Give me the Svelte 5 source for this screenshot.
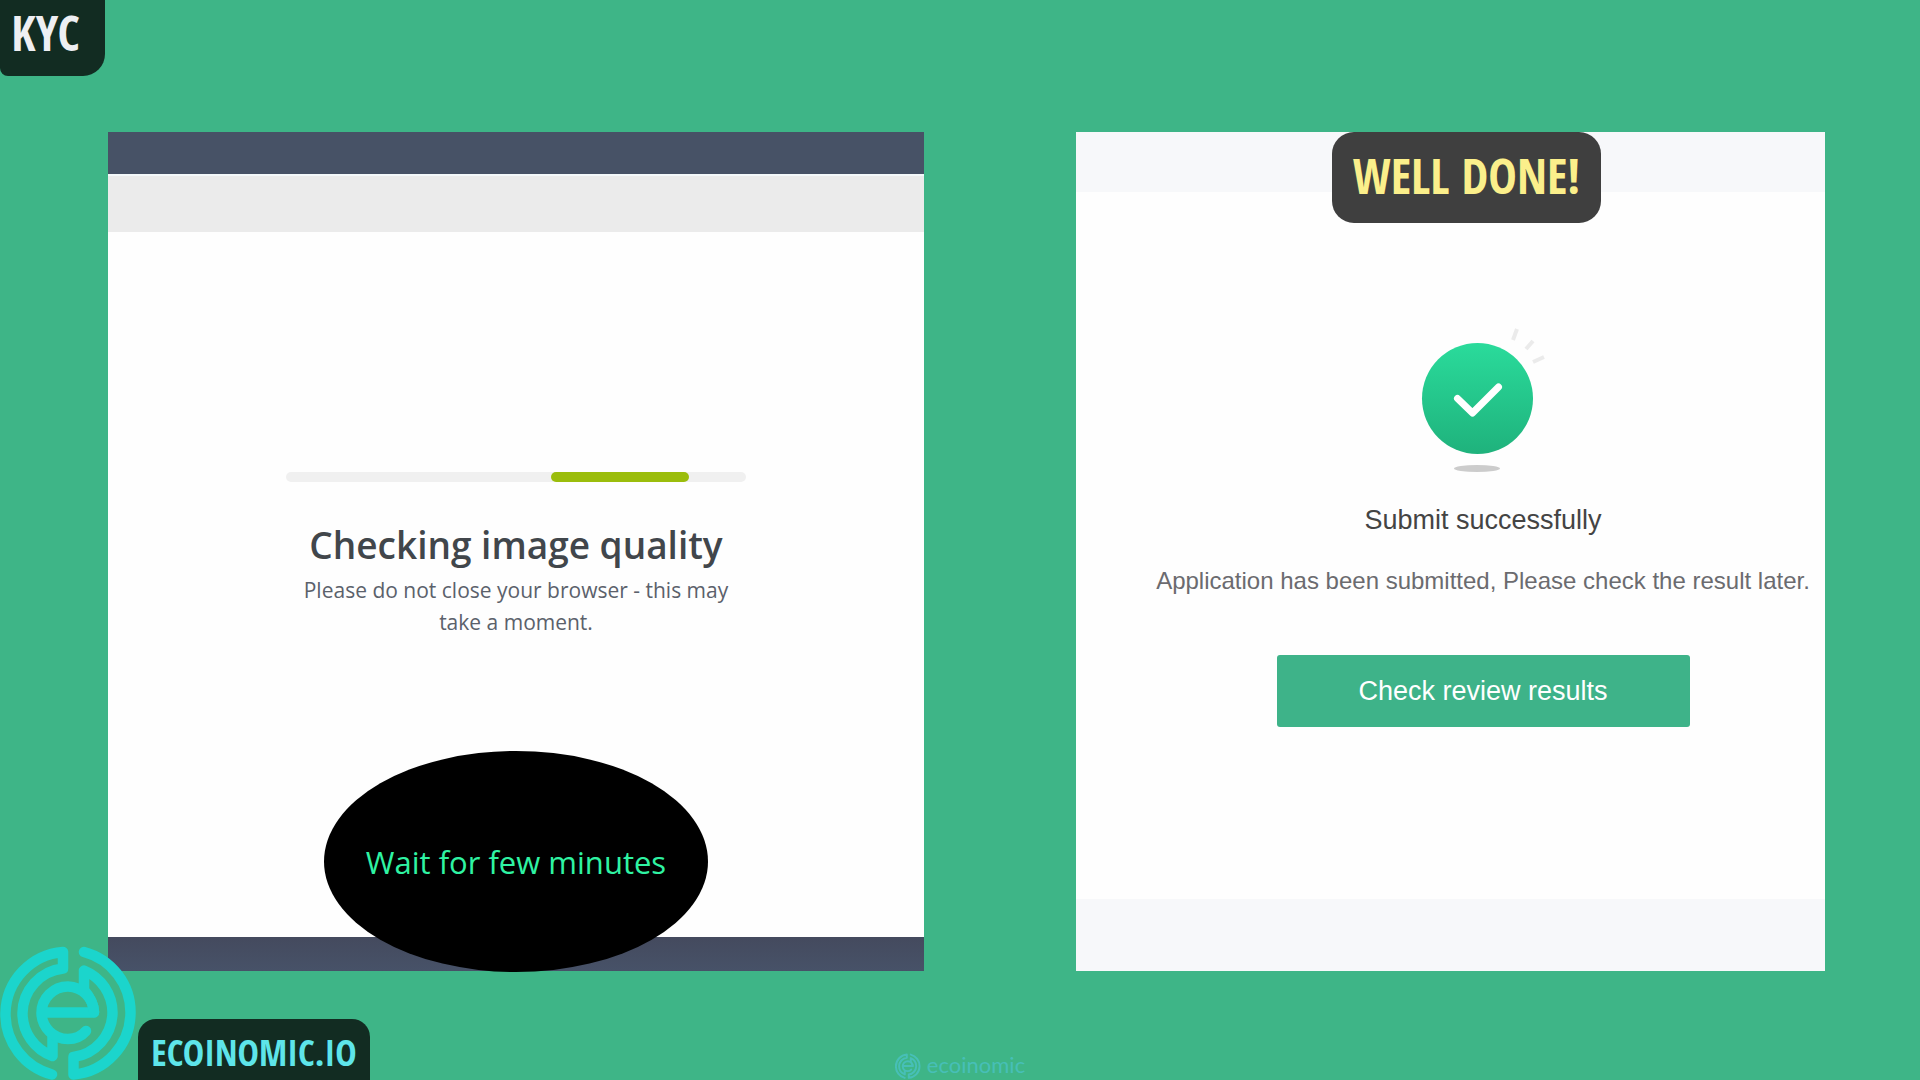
<script>
  const progress = { start: 57.7, size: 30 };
</script>

{#snippet mark()}
  <g fill="none" stroke="currentColor" stroke-width="10.500" stroke-linecap="round" stroke-linejoin="round">
    <path d="M52 134.500 A62.500 62.500 0 0 1 5.500 73 A62.500 62.500 0 0 1 63 12 V28.500 A45.500 45.500 0 0 0 22.500 73 A45.500 45.500 0 0 0 52.500 116 V97" />
    <path d="M42 72.500 H94 A26.500 26.500 0 0 0 68 46.500 A26.500 26.500 0 0 0 41.500 73 A26.500 26.500 0 0 0 68 99 Q79 99 86 91" />
    <path d="M84 12 A62.500 62.500 0 0 1 130.500 73 A62.500 62.500 0 0 1 73.500 134.500 V117 A45.500 45.500 0 0 0 112.500 73 A45.500 45.500 0 0 0 84 30.500 V50 Q93 60 94 72" />
  </g>
{/snippet}

<div class="page">
  <header><h1 class="badge kyc">KYC</h1></header>

  <main>
    <section class="card checking">
      <div class="bar top"></div>
      <div class="strip"></div>
      <div class="body">
        <div class="track" role="progressbar" aria-label="Checking image quality">
          <div class="fill" style="margin-left: {progress.start}%; width: {progress.size}%"></div>
        </div>
        <h2>Checking image quality</h2>
        <p>Please do not close your browser - this may take a moment.</p>
      </div>
      <div class="bar bottom"></div>
      <div class="bubble">Wait for few minutes</div>
    </section>

    <section class="card done">
      <div class="badge well">WELL DONE!</div>
      <div class="result">
        <svg class="success" viewBox="0 0 130 150" aria-hidden="true">
          <defs>
            <linearGradient id="disc" x1="0" y1="0" x2="0" y2="1">
              <stop offset="0" stop-color="#2adb9b" />
              <stop offset="1" stop-color="#1fb27c" />
            </linearGradient>
          </defs>
          <circle cx="59.500" cy="73.500" r="55.500" fill="url(#disc)" />
          <path d="M39.500 73.500 L54.500 88 L80.500 62" fill="none" stroke="#fff" stroke-width="7" stroke-linecap="round" stroke-linejoin="round" />
          <path d="M95 15 L99 4 M108 24 L115 16 M115 37 L126 32" fill="none" stroke="#ebebeb" stroke-width="4" />
          <ellipse cx="59" cy="143.500" rx="23" ry="3.500" fill="#ccc" />
        </svg>
        <h2>Submit successfully</h2>
        <p>Application has been submitted, Please check the result later.</p>
        <button type="button">Check review results</button>
      </div>
    </section>
  </main>

  <footer>
    <svg class="logo" viewBox="0 4 137 136" aria-hidden="true">{@render mark()}</svg>
    <div class="badge site">ECOINOMIC.IO</div>
    <div class="watermark">
      <svg viewBox="0 4 137 136" aria-hidden="true">{@render mark()}</svg>
      <span>ecoinomic</span>
    </div>
  </footer>
</div>

<style>
  :global(body) { margin: 0; }
  .page {
    min-height: 100vh;
    display: grid;
    grid-template-rows: 132px 1fr 109px;
    background: #3eb587;
    font-family: "Open Sans", sans-serif;
    overflow: hidden;
  }
  h1, h2, p { margin: 0; font-weight: 400; }
  header { display: flex; align-items: flex-start; }
  .badge {
    box-sizing: border-box;
    font-family: "Noto Sans ExtraCondensed", "Open Sans Condensed", "Liberation Sans Narrow", "Liberation Sans", sans-serif;
    font-weight: 700;
    white-space: nowrap;
    text-align: center;
  }
  .kyc {
    width: 105px;
    height: 76px;
    padding-right: 14px;
    border-radius: 0 0 22px 8px;
    background: #122c22;
    color: #eeeff3;
    font-size: 48px;
    line-height: 66px;
  }
  main {
    display: grid;
    grid-template-columns: 816fr 749fr;
    gap: 152px;
    padding: 0 95px 0 108px;
  }
  .card { position: relative; display: flex; flex-direction: column; background: #fefefe; }
  .bar { background: #475266; }
  .top { height: 42px; border-bottom: 2px solid #f4f8fa; }
  .bottom { height: 34px; background: linear-gradient(#444a5e, #475268); }
  .strip { height: 56px; background: #ebebeb; }
  .body { flex: 1; display: flex; flex-direction: column; align-items: center; padding-top: 240px; text-align: center; }
  .track { width: 460px; height: 10px; border-radius: 5px; background: #f0f0f0; }
  .fill { height: 10px; border-radius: 5px; background: #9bbd0c; }
  .body h2 { margin-top: 39px; color: #41464b; font-size: 37px; font-weight: 600; line-height: 48px; white-space: nowrap; }
  .body p { width: 440px; margin-top: 5px; color: #5b616b; font-size: 21px; line-height: 32px; }
  .bubble {
    position: absolute;
    left: 50%;
    bottom: -1px;
    width: 384px;
    height: 221px;
    transform: translateX(-50%);
    display: grid;
    place-items: center;
    border-radius: 50%;
    background: #000;
    color: #2ff3a3;
    font-size: 31px;
    line-height: 40px;
    white-space: nowrap;
  }
  .done { box-sizing: border-box; border-top: 60px solid #f7f8fa; border-bottom: 72px solid #f7f8fa; }
  .well {
    position: absolute;
    top: -60px;
    left: 256px;
    width: 269px;
    height: 91px;
    border-radius: 22px;
    background: #3f3f3f;
    color: #fbef8b;
    font-size: 48px;
    line-height: 88px;
  }
  .result {
    display: flex;
    flex-direction: column;
    align-items: center;
    padding: 133px 0 0 65px;
    font-family: "Liberation Sans", Arial, sans-serif;
    white-space: nowrap;
  }
  .success { width: 130px; height: 150px; }
  .result h2 { margin-top: 28px; color: #444; font-size: 27px; line-height: 34px; }
  .result p { margin-top: 28px; color: #6b6b6f; font-size: 24px; line-height: 32px; }
  button {
    width: 413px;
    height: 72px;
    margin-top: 58px;
    border: 0;
    border-radius: 3px;
    background: #3eb389;
    color: #fff;
    font: 27px "Liberation Sans", Arial, sans-serif;
  }
  footer { position: relative; display: flex; align-items: flex-end; gap: 1px; }
  .logo { position: relative; width: 137px; height: 136px; color: #1bd5cc; }
  .site {
    width: 232px;
    height: 61px;
    border-radius: 18px 18px 0 0;
    background: #122c22;
    color: #5ee5ea;
    font-size: 36px;
    line-height: 68px;
  }
  .watermark {
    position: absolute;
    left: 50%;
    bottom: 0;
    transform: translateX(-50%);
    display: flex;
    align-items: center;
    gap: 6px;
    color: #47bfb7;
    font: 22px/26px Lato, sans-serif;
  }
  .watermark span { padding-bottom: 2px; }
  .watermark svg { width: 26px; height: 26px; }
</style>
